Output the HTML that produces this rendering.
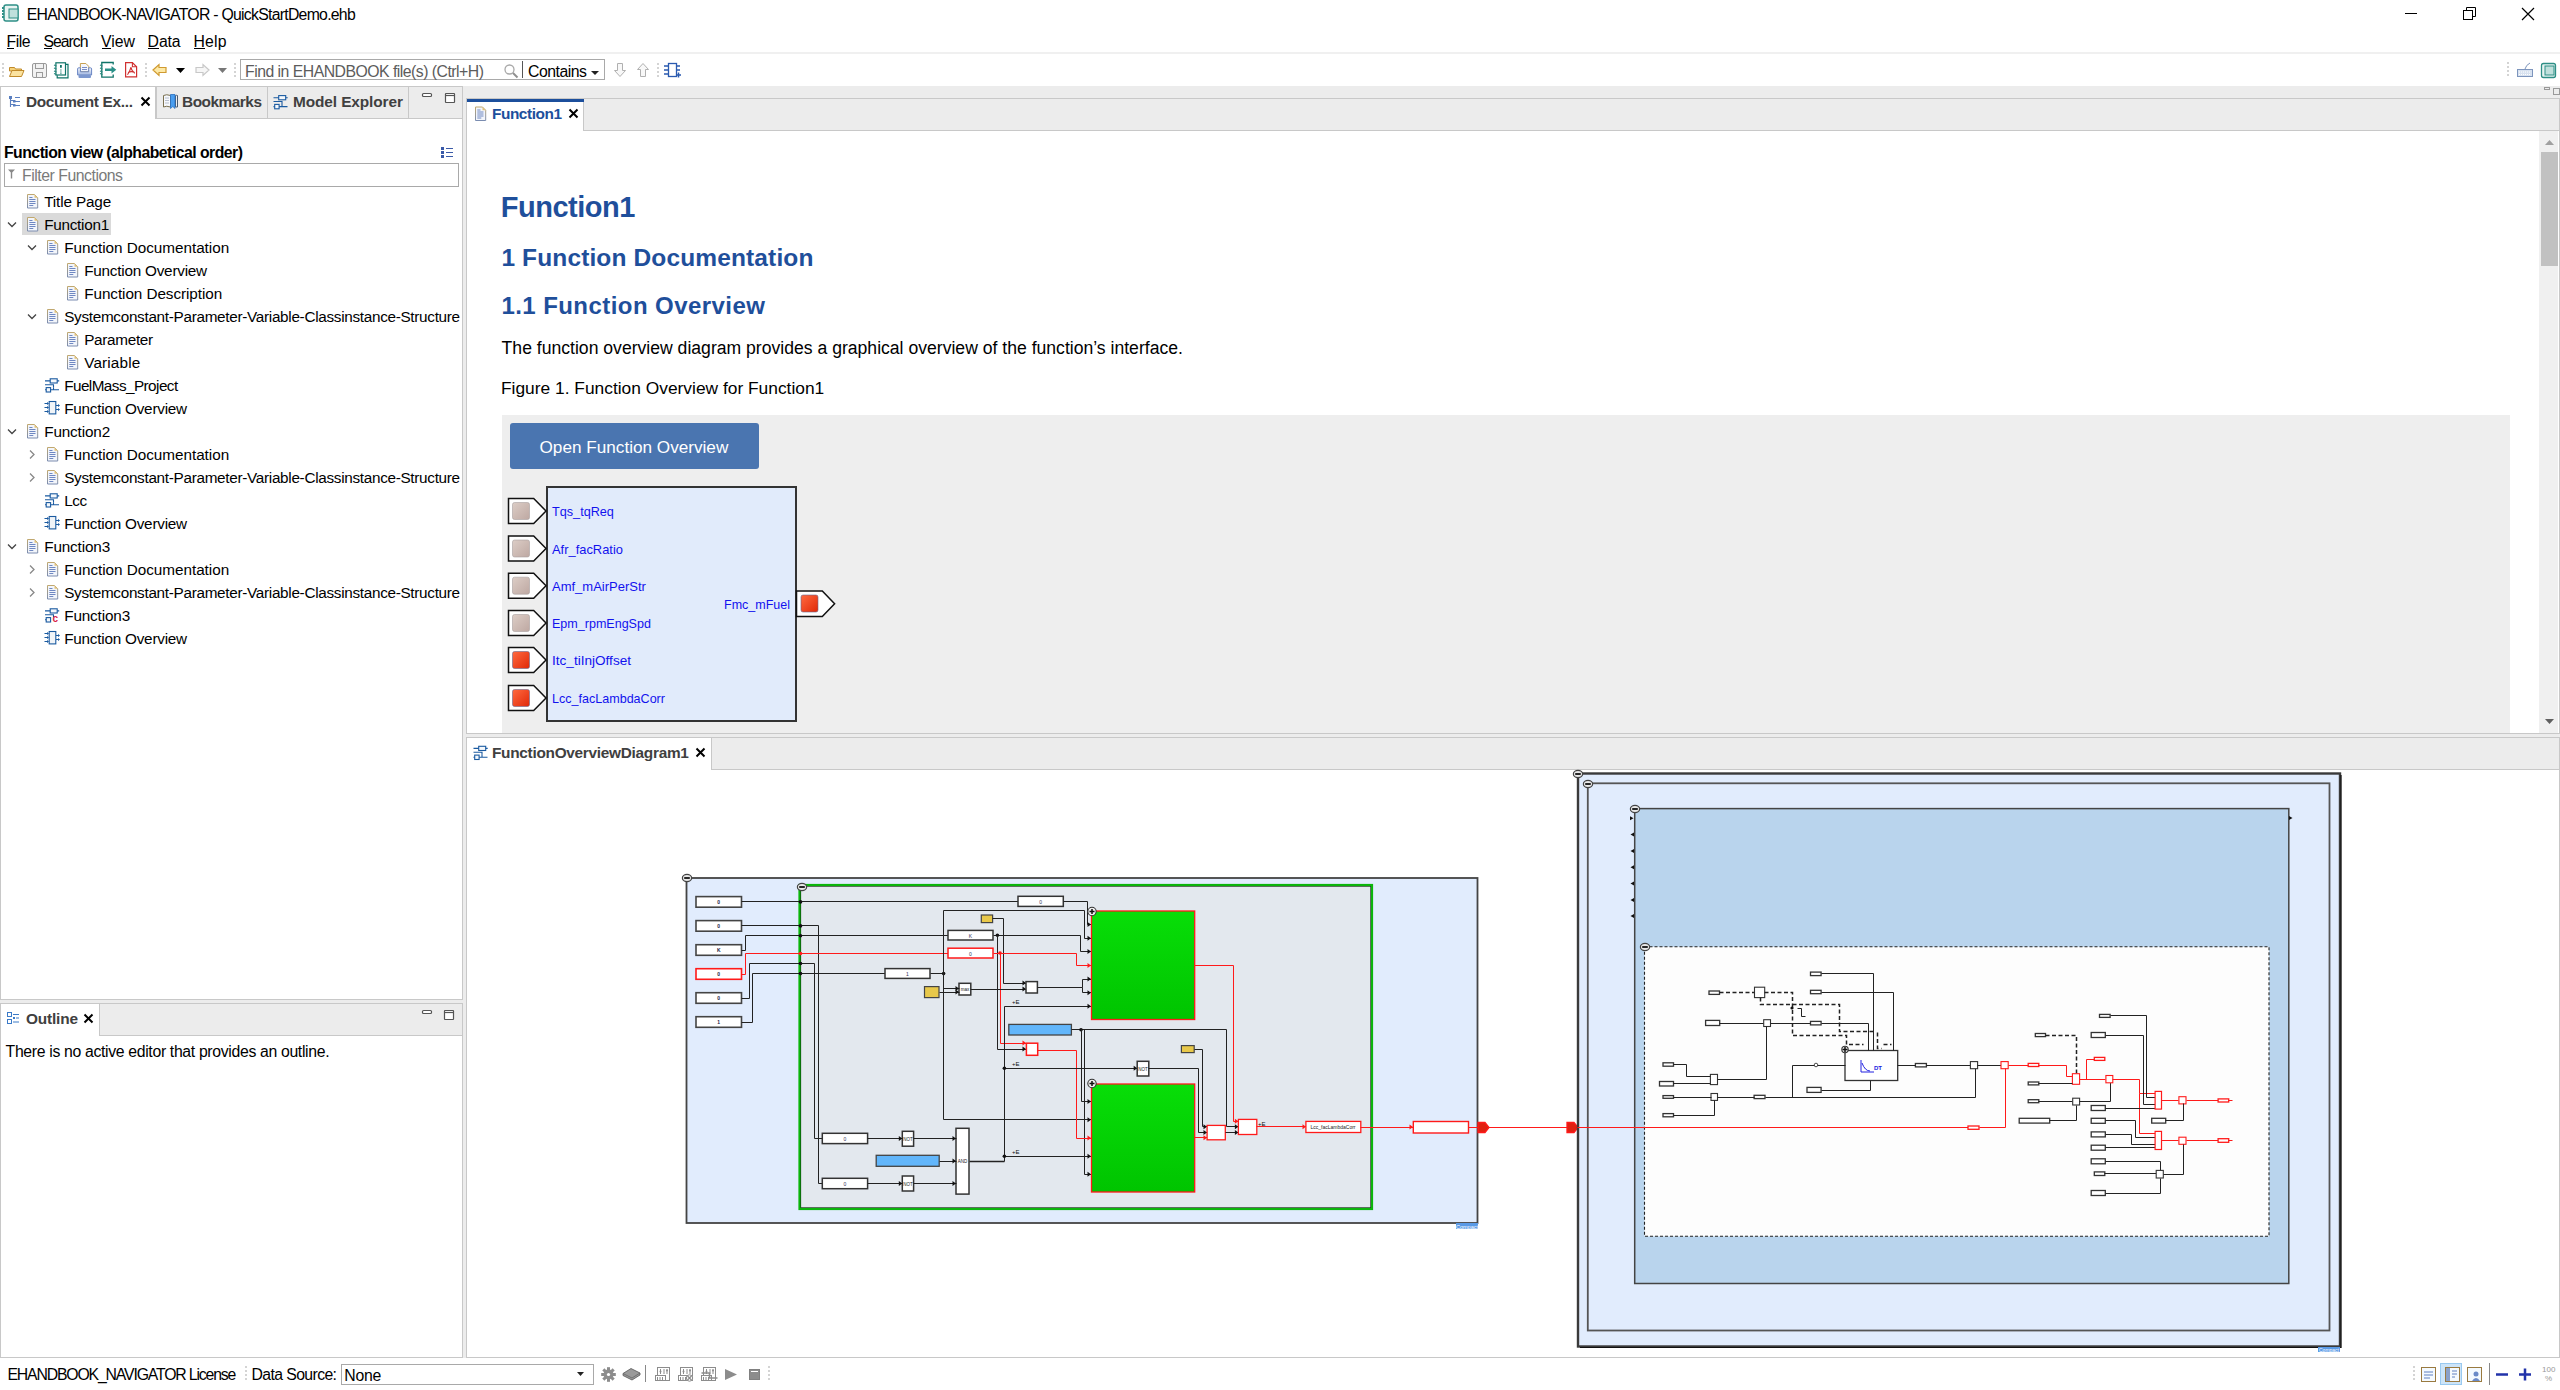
<!DOCTYPE html>
<html><head><meta charset="utf-8"><title>EHANDBOOK-NAVIGATOR</title>
<style>
html,body{margin:0;padding:0;width:2560px;height:1390px;overflow:hidden;background:#fff;font-family:'Liberation Sans', sans-serif;}
</style></head><body>
<div style="position:absolute;left:7px;top:48px;width:7px;height:1px;background:#000"></div><div style="position:absolute;left:44px;top:48px;width:8px;height:1px;background:#000"></div><div style="position:absolute;left:102px;top:48px;width:9px;height:1px;background:#000"></div><div style="position:absolute;left:148px;top:48px;width:11px;height:1px;background:#000"></div><div style="position:absolute;left:194px;top:48px;width:11px;height:1px;background:#000"></div><div style="position:absolute;left:0px;top:52px;width:2560px;height:2px;background:#f0f0f0"></div><div style="position:absolute;left:2px;top:63px;width:2px;height:2px;background:#d4d4d4"></div><div style="position:absolute;left:2px;top:67px;width:2px;height:2px;background:#d4d4d4"></div><div style="position:absolute;left:2px;top:71px;width:2px;height:2px;background:#d4d4d4"></div><div style="position:absolute;left:2px;top:75px;width:2px;height:2px;background:#d4d4d4"></div><div style="position:absolute;left:145px;top:63px;width:2px;height:2px;background:#d4d4d4"></div><div style="position:absolute;left:145px;top:67px;width:2px;height:2px;background:#d4d4d4"></div><div style="position:absolute;left:145px;top:71px;width:2px;height:2px;background:#d4d4d4"></div><div style="position:absolute;left:145px;top:75px;width:2px;height:2px;background:#d4d4d4"></div><div style="position:absolute;left:234px;top:63px;width:2px;height:2px;background:#d4d4d4"></div><div style="position:absolute;left:234px;top:67px;width:2px;height:2px;background:#d4d4d4"></div><div style="position:absolute;left:234px;top:71px;width:2px;height:2px;background:#d4d4d4"></div><div style="position:absolute;left:234px;top:75px;width:2px;height:2px;background:#d4d4d4"></div><div style="position:absolute;left:657px;top:63px;width:2px;height:2px;background:#d4d4d4"></div><div style="position:absolute;left:657px;top:67px;width:2px;height:2px;background:#d4d4d4"></div><div style="position:absolute;left:657px;top:71px;width:2px;height:2px;background:#d4d4d4"></div><div style="position:absolute;left:657px;top:75px;width:2px;height:2px;background:#d4d4d4"></div><div style="position:absolute;left:2413px;top:1366px;width:2px;height:2px;background:#d4d4d4"></div><div style="position:absolute;left:2413px;top:1370px;width:2px;height:2px;background:#d4d4d4"></div><div style="position:absolute;left:2413px;top:1374px;width:2px;height:2px;background:#d4d4d4"></div><div style="position:absolute;left:2413px;top:1378px;width:2px;height:2px;background:#d4d4d4"></div><div style="position:absolute;left:768px;top:1366px;width:2px;height:2px;background:#d4d4d4"></div><div style="position:absolute;left:768px;top:1370px;width:2px;height:2px;background:#d4d4d4"></div><div style="position:absolute;left:768px;top:1374px;width:2px;height:2px;background:#d4d4d4"></div><div style="position:absolute;left:768px;top:1378px;width:2px;height:2px;background:#d4d4d4"></div><div style="position:absolute;left:245px;top:1366px;width:2px;height:2px;background:#d4d4d4"></div><div style="position:absolute;left:245px;top:1370px;width:2px;height:2px;background:#d4d4d4"></div><div style="position:absolute;left:245px;top:1374px;width:2px;height:2px;background:#d4d4d4"></div><div style="position:absolute;left:245px;top:1378px;width:2px;height:2px;background:#d4d4d4"></div><div style="position:absolute;left:2507px;top:62px;width:2px;height:2px;background:#d4d4d4"></div><div style="position:absolute;left:2507px;top:66px;width:2px;height:2px;background:#d4d4d4"></div><div style="position:absolute;left:2507px;top:70px;width:2px;height:2px;background:#d4d4d4"></div><div style="position:absolute;left:2507px;top:74px;width:2px;height:2px;background:#d4d4d4"></div><div style="position:absolute;left:240px;top:59px;width:365px;height:21px;border:1px solid #a9a9a9;background:#fff;box-sizing:border-box"></div><div style="position:absolute;left:522px;top:61px;width:1px;height:17px;background:#555"></div><div style="position:absolute;left:0px;top:86px;width:2560px;height:1272px;background:#ececec"></div><div style="position:absolute;left:0px;top:86px;width:463px;height:914px;background:#fff;border:1px solid #c8c8c8;box-sizing:border-box"></div><div style="position:absolute;left:1px;top:87px;width:461px;height:31px;background:#ececec"></div><div style="position:absolute;left:1px;top:118px;width:461px;height:1px;background:#c8c8c8"></div><div style="position:absolute;left:1px;top:86px;width:155px;height:33px;background:#fff;border-right:1px solid #c8c8c8;border-top:1px solid #c8c8c8;box-sizing:border-box"></div><div style="position:absolute;left:156px;top:86px;width:1px;height:33px;background:#c8c8c8"></div><div style="position:absolute;left:267px;top:87px;width:1px;height:31px;background:#c8c8c8"></div><div style="position:absolute;left:408px;top:87px;width:1px;height:31px;background:#c8c8c8"></div><div style="position:absolute;left:4px;top:163px;width:455px;height:24px;border:1px solid #a9a9a9;background:#fff;box-sizing:border-box"></div><div style="position:absolute;left:22px;top:213px;width:89px;height:22px;background:#dadada"></div><div style="position:absolute;left:0px;top:1003px;width:463px;height:355px;background:#fff;border:1px solid #c8c8c8;box-sizing:border-box"></div><div style="position:absolute;left:1px;top:1004px;width:461px;height:31px;background:#ececec"></div><div style="position:absolute;left:1px;top:1035px;width:461px;height:1px;background:#c8c8c8"></div><div style="position:absolute;left:1px;top:1003px;width:99px;height:33px;background:#fff;border-top:1px solid #c8c8c8;border-right:1px solid #c8c8c8;box-sizing:border-box"></div><div style="position:absolute;left:466px;top:98px;width:2094px;height:636px;background:#fff;border:1px solid #c8c8c8;box-sizing:border-box"></div><div style="position:absolute;left:467px;top:99px;width:2092px;height:31px;background:#ececec"></div><div style="position:absolute;left:467px;top:130px;width:2092px;height:1px;background:#c8c8c8"></div><div style="position:absolute;left:467px;top:99px;width:117px;height:32px;background:#fff;border-right:1px solid #c8c8c8;box-sizing:border-box"></div><div style="position:absolute;left:467px;top:99px;width:117px;height:3px;background:#1c4f9c"></div><div style="position:absolute;left:2539px;top:131px;width:19px;height:602px;background:#f0f0f0"></div><div style="position:absolute;left:2541px;top:152px;width:17px;height:114px;background:#c1c1c1"></div><div style="position:absolute;left:502px;top:415px;width:2008px;height:318px;background:#eeeeee"></div><div style="position:absolute;left:510px;top:423px;width:249px;height:46px;background:#4a75b0;border-radius:3px"></div><div style="position:absolute;left:546px;top:486px;width:251px;height:236px;background:#e1ebfb;border:2px solid #333;box-sizing:border-box"></div><div style="position:absolute;left:466px;top:737px;width:2094px;height:621px;background:#fff;border:1px solid #c8c8c8;box-sizing:border-box"></div><div style="position:absolute;left:467px;top:738px;width:2092px;height:31px;background:#ececec"></div><div style="position:absolute;left:467px;top:769px;width:2092px;height:1px;background:#c8c8c8"></div><div style="position:absolute;left:467px;top:738px;width:245px;height:32px;background:#fff;border-right:1px solid #c8c8c8;box-sizing:border-box"></div><div style="position:absolute;left:341px;top:1364px;width:253px;height:21px;border:1px solid #a9a9a9;background:#fff;box-sizing:border-box"></div><div style="position:absolute;left:645px;top:1365px;width:1px;height:17px;background:#888"></div><div style="position:absolute;left:2440px;top:1363px;width:22px;height:22px;background:#cce4f8;border:1px solid #99c9f0;box-sizing:border-box"></div><div style="position:absolute;left:2489px;top:1363px;width:1px;height:22px;background:#888"></div>
<svg style="position:absolute;left:0;top:0" width="2560" height="1390" viewBox="0 0 2560 1390">
<defs>
<linearGradient id="gred" x1="0" y1="0" x2="1" y2="1"><stop offset="0" stop-color="#ff6a40"/><stop offset="1" stop-color="#e02808"/></linearGradient>
<linearGradient id="gdoc" x1="0" y1="0" x2="0" y2="1"><stop offset="0" stop-color="#c0a870"/><stop offset="1" stop-color="#7a8cb0"/></linearGradient>
<linearGradient id="ggray" x1="0" y1="0" x2="1" y2="1"><stop offset="0" stop-color="#dccdc6"/><stop offset="1" stop-color="#bea8a2"/></linearGradient>
</defs>
<line x1="2405" y1="13.5" x2="2417" y2="13.5" stroke="#000" stroke-width="1"/><rect x="2463.5" y="10.5" width="9" height="9" fill="none" stroke="#000" stroke-width="1"/><path d="M2466.5 10.5 V7.5 H2475.5 V16.5 H2472.5" fill="none" stroke="#000" stroke-width="1"/><path d="M2522 8 L2534 20 M2534 8 L2522 20" stroke="#000" stroke-width="1.2"/><rect x="4" y="5" width="14" height="16" rx="2" fill="#e8f4f2" stroke="#2e8f86" stroke-width="1.5"/><rect x="9" y="9" width="9" height="9" fill="#bfe0dc" stroke="#2e8f86"/><path d="M3 7 v12" stroke="#2e8f86" stroke-width="2" stroke-dasharray="2 1"/><path d="M9.5 67.5 h5 l1 1.5 h6 v2 h-12 z" fill="#f6d27a" stroke="#c08a2a"/><path d="M9.5 76.5 l2.5 -6 h12 l-2.5 6 z" fill="#fbe3a0" stroke="#c08a2a"/><rect x="32.5" y="63.5" width="14" height="14" rx="1.5" fill="#f2f2f2" stroke="#9a9a9a"/><rect x="35.5" y="63.5" width="8" height="5" fill="none" stroke="#9a9a9a"/><rect x="36.5" y="72.5" width="6" height="5" fill="none" stroke="#9a9a9a"/><path d="M65.8 64.3 H68 V77.8 H57.2 V75.2" fill="none" stroke="#0f7468" stroke-width="1.2"/><rect x="55.9" y="62.8" width="9.6" height="12.2" fill="#fff" stroke="#0f7468" stroke-width="1.2"/><path d="M54 65 l2.5 1 M54 68 l2.5 1 M54 71 l2.5 1 M54 73.5 l2.5 1" stroke="#2a8a80" stroke-width="1.2"/><path d="M60 65 h1.8 v2.8 h-1.8 z M60.3 69.5 h1.2 v1 h-1.2 z M60.3 71.5 h1.2 v1 h-1.2 z M60.3 73.3 h1.2 v0.8 h-1.2 z" fill="#0f7468"/><path d="M80.4 63.5 h5.5 l2.8 2.8 v5.4 h-8.3 z" fill="#f4f6fc" stroke="#c8a050" stroke-width="1"/><defs><linearGradient id="gpr" x1="0" y1="0" x2="0" y2="1"><stop offset="0" stop-color="#ffffff"/><stop offset="1" stop-color="#9fb4de"/></linearGradient></defs><path d="M77.6 69 q0 -1.2 1.2 -1.2 h1.6 v4 h8.3 v-4 h1.7 q1.2 0 1.2 1.2 v6 h-14 z" fill="url(#gpr)" stroke="#6a86c4" stroke-width="1"/><rect x="78.5" y="75" width="12.5" height="3" rx="1" fill="#7d98cf"/><path d="M82 67.5 h5 M82 69.5 h5" stroke="#6a80c0" stroke-width="0.9"/><path d="M113.2 64.5 V62.5 H101.8 V77.2 H113.2 V74.5" fill="none" stroke="#0f7468" stroke-width="1.3"/><path d="M100 65 l2.5 1 M100 68 l2.5 1 M100 71 l2.5 1 M100 73.5 l2.5 1" stroke="#2a8a80" stroke-width="1.2"/><path d="M105 68.5 h6.5 v-2.5 l4.8 3.8 l-4.8 3.8 v-2.5 h-6.5 z" fill="#2a9088"/><path d="M125.6 62.6 h6.8 l4.2 4.2 v10 h-11 z" fill="#fff" stroke="#d03030" stroke-width="1.2"/><path d="M132.4 62.6 v4.2 h4.2" fill="none" stroke="#d03030" stroke-width="1.1"/><path d="M131 67.2 q-0.8 3.5 -3.5 7.5 M131 67.2 q0.5 3.8 3.8 6 M128 72.5 q3 -1.5 6.5 -0.3" fill="none" stroke="#d03030" stroke-width="1.1"/><path d="M153 70 l6 -5.5 v3 h7 v5 h-7 v3 z" fill="#fde9a6" stroke="#d09a30" stroke-width="1.2"/><path d="M176 68 h9 l-4.5 5 z" fill="#000"/><path d="M209 70 l-6 -5.5 v3 h-7 v5 h7 v3 z" fill="#f6f6f6" stroke="#c8c8c8" stroke-width="1.2"/><path d="M218 68 h9 l-4.5 5 z" fill="#777"/><circle cx="509.5" cy="69.5" r="4.5" fill="none" stroke="#a8a8a8" stroke-width="1.3"/><path d="M513 73 l4.5 4.5" stroke="#909090" stroke-width="2"/><path d="M591 71 h8 l-4 4 z" fill="#222"/><path d="M617.5 63.5 h5 v7 h3 l-5.5 6 l-5.5 -6 h3 z" fill="#f8f8f8" stroke="#b0b0b0"/><path d="M640.5 76.5 h5 v-7 h3 l-5.5 -6 l-5.5 6 h3 z" fill="#f8f8f8" stroke="#b0b0b0"/><rect x="668.5" y="63.5" width="8" height="13" fill="#fff" stroke="#2a5ab0" stroke-width="1.3"/><path d="M664 66 h4 M664 70 h4 M664 74 h4 M677 66 h3 M677 70 h3" stroke="#2a5ab0" stroke-width="1.3"/><path d="M676 75 h5 M678.5 72.5 v5" stroke="#2a5ab0" stroke-width="1.5"/><rect x="2517.5" y="69.5" width="15" height="7" fill="#d8e2f0" stroke="#7d95bd"/><path d="M2525 69 q1 -4 5 -6" fill="none" stroke="#7d95bd"/><path d="M2519 72 h11 M2519 74.5 h11" stroke="#fff" stroke-dasharray="1 1"/><rect x="2541.5" y="63.5" width="14" height="14" rx="2" fill="#e8f4f2" stroke="#2e8f86" stroke-width="1.3"/><rect x="2545" y="66" width="9" height="9" fill="#bfe0dc" stroke="#2e8f86"/><path d="M10.5 97 v10 M10.5 100.5 h3 M10.5 104.5 h3 M15 97.5 h5 M15 101.5 h5 M15 105.5 h5" stroke="#5a7fc0" stroke-width="1.1" fill="none"/><rect x="9" y="96" width="3" height="3" fill="#5a7fc0"/><rect x="13" y="100" width="2.5" height="2.5" fill="#5a7fc0"/><rect x="13" y="104" width="2.5" height="2.5" fill="#5a7fc0"/><path d="M141.5 97.5 l8 8 M149.5 97.5 l-8 8" stroke="#000" stroke-width="2"/><path d="M163.5 95.5 q3 -1.5 7 0 v11.5 q-4 -1.5 -7 0 z" fill="#f6f8fc" stroke="#7a7050" stroke-width="1"/><path d="M175.5 95.5 q1.5 -0.5 2 0 v11.5 h-2 z" fill="#f0f0f0" stroke="#4a5a70" stroke-width="1"/><path d="M170.5 94.5 h4.5 v14 l-2.2 -2 l-2.3 2 z" fill="#4a9ef0" stroke="#2a70c0" stroke-width="0.8"/><path d="M165 98 h4 M165 100.5 h4 M165 103 h4" stroke="#a8b0c0" stroke-width="0.8"/><rect x="422.5" y="93.5" width="9" height="3" rx="1" fill="#fff" stroke="#555" stroke-width="1.2"/><rect x="445.5" y="93.5" width="9" height="9" rx="0.5" fill="#fff" stroke="#555" stroke-width="1.2"/><line x1="445" y1="95.5" x2="455" y2="95.5" stroke="#555" stroke-width="1.2"/><rect x="441" y="147" width="3" height="3" fill="#3a5aa8"/><rect x="441" y="151" width="3" height="3" fill="#3a5aa8"/><rect x="441" y="155" width="3" height="3" fill="#3a5aa8"/><path d="M446 148.5 h7 M446 152.5 h7 M446 156.5 h7" stroke="#3a5aa8" stroke-width="1"/><path d="M8 169.5 h7 l-2.8 3 v6 h-1.4 v-6 z" fill="#888"/><rect x="278.7" y="95.6" width="7" height="4.2" fill="#f4f8fc" stroke="#1a5aa0" stroke-width="1.1"/><path d="M273.5 97.7 h5.2 M285.7 97.7 h2 M273.5 101.5 h8.5 v2.5" fill="none" stroke="#1a5aa0" stroke-width="1.1"/><rect x="274.7" y="104.4" width="4.4" height="4.4" fill="#f4f8fc" stroke="#1a5aa0" stroke-width="1.1"/><path d="M273.5 106.6 h1.2" stroke="#1a5aa0" stroke-width="1.1"/><path d="M282.0 104 v2.6 M279.1 106.6 h8.4" fill="none" stroke="#1a5aa0" stroke-width="1.1"/><path d="M27.5 194.5 h7 l3.2 3.2 v10.3 h-10.2 z" fill="#f2f5fb" stroke="url(#gdoc)" stroke-width="1"/><path d="M34.5 194.5 v3.2 h3.2 z" fill="#e2c27a"/><path d="M29.3 197.5 h3.2 M29.3 199.5 h6.2 M29.3 201.5 h6.2 M29.3 203.5 h6.2 M29.3 205.5 h4" stroke="#6f88c2" stroke-width="1"/><path d="M8 222.5 l4 4 l4 -4" fill="none" stroke="#444" stroke-width="1.3"/><path d="M27.5 217.5 h7 l3.2 3.2 v10.3 h-10.2 z" fill="#f2f5fb" stroke="url(#gdoc)" stroke-width="1"/><path d="M34.5 217.5 v3.2 h3.2 z" fill="#e2c27a"/><path d="M29.3 220.5 h3.2 M29.3 222.5 h6.2 M29.3 224.5 h6.2 M29.3 226.5 h6.2 M29.3 228.5 h4" stroke="#6f88c2" stroke-width="1"/><path d="M28 245.5 l4 4 l4 -4" fill="none" stroke="#444" stroke-width="1.3"/><path d="M47.5 240.5 h7 l3.2 3.2 v10.3 h-10.2 z" fill="#f2f5fb" stroke="url(#gdoc)" stroke-width="1"/><path d="M54.5 240.5 v3.2 h3.2 z" fill="#e2c27a"/><path d="M49.3 243.5 h3.2 M49.3 245.5 h6.2 M49.3 247.5 h6.2 M49.3 249.5 h6.2 M49.3 251.5 h4" stroke="#6f88c2" stroke-width="1"/><path d="M67.5 263.5 h7 l3.2 3.2 v10.3 h-10.2 z" fill="#f2f5fb" stroke="url(#gdoc)" stroke-width="1"/><path d="M74.5 263.5 v3.2 h3.2 z" fill="#e2c27a"/><path d="M69.3 266.5 h3.2 M69.3 268.5 h6.2 M69.3 270.5 h6.2 M69.3 272.5 h6.2 M69.3 274.5 h4" stroke="#6f88c2" stroke-width="1"/><path d="M67.5 286.5 h7 l3.2 3.2 v10.3 h-10.2 z" fill="#f2f5fb" stroke="url(#gdoc)" stroke-width="1"/><path d="M74.5 286.5 v3.2 h3.2 z" fill="#e2c27a"/><path d="M69.3 289.5 h3.2 M69.3 291.5 h6.2 M69.3 293.5 h6.2 M69.3 295.5 h6.2 M69.3 297.5 h4" stroke="#6f88c2" stroke-width="1"/><path d="M28 314.5 l4 4 l4 -4" fill="none" stroke="#444" stroke-width="1.3"/><path d="M47.5 309.5 h7 l3.2 3.2 v10.3 h-10.2 z" fill="#f2f5fb" stroke="url(#gdoc)" stroke-width="1"/><path d="M54.5 309.5 v3.2 h3.2 z" fill="#e2c27a"/><path d="M49.3 312.5 h3.2 M49.3 314.5 h6.2 M49.3 316.5 h6.2 M49.3 318.5 h6.2 M49.3 320.5 h4" stroke="#6f88c2" stroke-width="1"/><path d="M67.5 332.5 h7 l3.2 3.2 v10.3 h-10.2 z" fill="#f2f5fb" stroke="url(#gdoc)" stroke-width="1"/><path d="M74.5 332.5 v3.2 h3.2 z" fill="#e2c27a"/><path d="M69.3 335.5 h3.2 M69.3 337.5 h6.2 M69.3 339.5 h6.2 M69.3 341.5 h6.2 M69.3 343.5 h4" stroke="#6f88c2" stroke-width="1"/><path d="M67.5 355.5 h7 l3.2 3.2 v10.3 h-10.2 z" fill="#f2f5fb" stroke="url(#gdoc)" stroke-width="1"/><path d="M74.5 355.5 v3.2 h3.2 z" fill="#e2c27a"/><path d="M69.3 358.5 h3.2 M69.3 360.5 h6.2 M69.3 362.5 h6.2 M69.3 364.5 h6.2 M69.3 366.5 h4" stroke="#6f88c2" stroke-width="1"/><rect x="50.2" y="378.8" width="7" height="4.2" fill="#f4f8fc" stroke="#1a5aa0" stroke-width="1.1"/><path d="M45 380.9 h5.2 M57.2 380.9 h2 M45 384.7 h8.5 v2.5" fill="none" stroke="#1a5aa0" stroke-width="1.1"/><rect x="46.2" y="387.59999999999997" width="4.4" height="4.4" fill="#f4f8fc" stroke="#1a5aa0" stroke-width="1.1"/><path d="M45 389.8 h1.2" stroke="#1a5aa0" stroke-width="1.1"/><path d="M53.5 387.2 v2.6 M50.6 389.8 h8.4" fill="none" stroke="#1a5aa0" stroke-width="1.1"/><rect x="49.2" y="401.5" width="6.6" height="12.4" fill="#f0f4f8" stroke="#1a5aa0" stroke-width="1.1"/><path d="M44.5 403.5 h3.5 M44.5 407.5 h3.5 M44.5 411.5 h3.5 M56.0 405.5 h3 M56.0 409.5 h3" stroke="#1a5aa0" stroke-width="1.1"/><path d="M47.0 402.0 l2 1.5 l-2 1.5 z M47.0 406.0 l2 1.5 l-2 1.5 z M47.0 410.0 l2 1.5 l-2 1.5 z M58.0 404.0 l2 1.5 l-2 1.5 z M58.0 408.0 l2 1.5 l-2 1.5 z" fill="#1a5aa0"/><path d="M8 429.5 l4 4 l4 -4" fill="none" stroke="#444" stroke-width="1.3"/><path d="M27.5 424.5 h7 l3.2 3.2 v10.3 h-10.2 z" fill="#f2f5fb" stroke="url(#gdoc)" stroke-width="1"/><path d="M34.5 424.5 v3.2 h3.2 z" fill="#e2c27a"/><path d="M29.3 427.5 h3.2 M29.3 429.5 h6.2 M29.3 431.5 h6.2 M29.3 433.5 h6.2 M29.3 435.5 h4" stroke="#6f88c2" stroke-width="1"/><path d="M30 450.5 l4 4 l-4 4" fill="none" stroke="#888" stroke-width="1.3"/><path d="M47.5 447.5 h7 l3.2 3.2 v10.3 h-10.2 z" fill="#f2f5fb" stroke="url(#gdoc)" stroke-width="1"/><path d="M54.5 447.5 v3.2 h3.2 z" fill="#e2c27a"/><path d="M49.3 450.5 h3.2 M49.3 452.5 h6.2 M49.3 454.5 h6.2 M49.3 456.5 h6.2 M49.3 458.5 h4" stroke="#6f88c2" stroke-width="1"/><path d="M30 473.5 l4 4 l-4 4" fill="none" stroke="#888" stroke-width="1.3"/><path d="M47.5 470.5 h7 l3.2 3.2 v10.3 h-10.2 z" fill="#f2f5fb" stroke="url(#gdoc)" stroke-width="1"/><path d="M54.5 470.5 v3.2 h3.2 z" fill="#e2c27a"/><path d="M49.3 473.5 h3.2 M49.3 475.5 h6.2 M49.3 477.5 h6.2 M49.3 479.5 h6.2 M49.3 481.5 h4" stroke="#6f88c2" stroke-width="1"/><rect x="50.2" y="493.8" width="7" height="4.2" fill="#f4f8fc" stroke="#1a5aa0" stroke-width="1.1"/><path d="M45 495.9 h5.2 M57.2 495.9 h2 M45 499.7 h8.5 v2.5" fill="none" stroke="#1a5aa0" stroke-width="1.1"/><rect x="46.2" y="502.59999999999997" width="4.4" height="4.4" fill="#f4f8fc" stroke="#1a5aa0" stroke-width="1.1"/><path d="M45 504.8 h1.2" stroke="#1a5aa0" stroke-width="1.1"/><path d="M53.5 502.2 v2.6 M50.6 504.8 h8.4" fill="none" stroke="#1a5aa0" stroke-width="1.1"/><rect x="49.2" y="516.5" width="6.6" height="12.4" fill="#f0f4f8" stroke="#1a5aa0" stroke-width="1.1"/><path d="M44.5 518.5 h3.5 M44.5 522.5 h3.5 M44.5 526.5 h3.5 M56.0 520.5 h3 M56.0 524.5 h3" stroke="#1a5aa0" stroke-width="1.1"/><path d="M47.0 517.0 l2 1.5 l-2 1.5 z M47.0 521.0 l2 1.5 l-2 1.5 z M47.0 525.0 l2 1.5 l-2 1.5 z M58.0 519.0 l2 1.5 l-2 1.5 z M58.0 523.0 l2 1.5 l-2 1.5 z" fill="#1a5aa0"/><path d="M8 544.5 l4 4 l4 -4" fill="none" stroke="#444" stroke-width="1.3"/><path d="M27.5 539.5 h7 l3.2 3.2 v10.3 h-10.2 z" fill="#f2f5fb" stroke="url(#gdoc)" stroke-width="1"/><path d="M34.5 539.5 v3.2 h3.2 z" fill="#e2c27a"/><path d="M29.3 542.5 h3.2 M29.3 544.5 h6.2 M29.3 546.5 h6.2 M29.3 548.5 h6.2 M29.3 550.5 h4" stroke="#6f88c2" stroke-width="1"/><path d="M30 565.5 l4 4 l-4 4" fill="none" stroke="#888" stroke-width="1.3"/><path d="M47.5 562.5 h7 l3.2 3.2 v10.3 h-10.2 z" fill="#f2f5fb" stroke="url(#gdoc)" stroke-width="1"/><path d="M54.5 562.5 v3.2 h3.2 z" fill="#e2c27a"/><path d="M49.3 565.5 h3.2 M49.3 567.5 h6.2 M49.3 569.5 h6.2 M49.3 571.5 h6.2 M49.3 573.5 h4" stroke="#6f88c2" stroke-width="1"/><path d="M30 588.5 l4 4 l-4 4" fill="none" stroke="#888" stroke-width="1.3"/><path d="M47.5 585.5 h7 l3.2 3.2 v10.3 h-10.2 z" fill="#f2f5fb" stroke="url(#gdoc)" stroke-width="1"/><path d="M54.5 585.5 v3.2 h3.2 z" fill="#e2c27a"/><path d="M49.3 588.5 h3.2 M49.3 590.5 h6.2 M49.3 592.5 h6.2 M49.3 594.5 h6.2 M49.3 596.5 h4" stroke="#6f88c2" stroke-width="1"/><rect x="50.2" y="608.8000000000001" width="7" height="4.2" fill="#f4f8fc" stroke="#1a5aa0" stroke-width="1.1"/><path d="M45 610.9000000000001 h5.2 M57.2 610.9000000000001 h2 M45 614.7 h8.5 v2.5" fill="none" stroke="#1a5aa0" stroke-width="1.1"/><rect x="46.2" y="617.6" width="4.4" height="4.4" fill="#f4f8fc" stroke="#1a5aa0" stroke-width="1.1"/><path d="M45 619.8000000000001 h1.2" stroke="#1a5aa0" stroke-width="1.1"/><text x="52.6" y="622.0" font-family="Liberation Sans" font-weight="700" font-size="10" fill="#d81e48">c</text><rect x="49.2" y="631.5" width="6.6" height="12.4" fill="#f0f4f8" stroke="#1a5aa0" stroke-width="1.1"/><path d="M44.5 633.5 h3.5 M44.5 637.5 h3.5 M44.5 641.5 h3.5 M56.0 635.5 h3 M56.0 639.5 h3" stroke="#1a5aa0" stroke-width="1.1"/><path d="M47.0 632.0 l2 1.5 l-2 1.5 z M47.0 636.0 l2 1.5 l-2 1.5 z M47.0 640.0 l2 1.5 l-2 1.5 z M58.0 634.0 l2 1.5 l-2 1.5 z M58.0 638.0 l2 1.5 l-2 1.5 z" fill="#1a5aa0"/><rect x="7.5" y="1012.5" width="4" height="4" fill="#fff" stroke="#3a7ac8"/><rect x="7.5" y="1019.5" width="4" height="4" fill="#fff" stroke="#3a7ac8"/><rect x="13" y="1017" width="2" height="2" fill="#3a7ac8"/><path d="M13 1014.5 h6 M16 1018 h3 M13 1022 h6" stroke="#3a7ac8"/><path d="M84.5 1014.5 l8 8 M92.5 1014.5 l-8 8" stroke="#000" stroke-width="2"/><rect x="422.5" y="1010.5" width="9" height="3" rx="1" fill="#fff" stroke="#555" stroke-width="1.2"/><rect x="444.5" y="1010.5" width="9" height="9" rx="0.5" fill="#fff" stroke="#555" stroke-width="1.2"/><line x1="444" y1="1012.5" x2="454" y2="1012.5" stroke="#555" stroke-width="1.2"/><path d="M475.5 107 h7 l3.2 3.2 v10.3 h-10.2 z" fill="#f2f5fb" stroke="url(#gdoc)" stroke-width="1"/><path d="M482.5 107 v3.2 h3.2 z" fill="#e2c27a"/><path d="M477.3 110 h3.2 M477.3 112 h6.2 M477.3 114 h6.2 M477.3 116 h6.2 M477.3 118 h4" stroke="#6f88c2" stroke-width="1"/><path d="M569.5 109.5 l8 8 M577.5 109.5 l-8 8" stroke="#000" stroke-width="2"/><rect x="2544.5" y="87.5" width="5" height="2" fill="none" stroke="#999"/><rect x="2553.5" y="88.5" width="6" height="6" fill="none" stroke="#999"/><path d="M2545 145 h9 l-4.5 -5 z" fill="#a0a0a0"/><path d="M2545 719 h9 l-4.5 5 z" fill="#606060"/><path d="M508.5 498.5 h25.2 l12.3 12.5 l-12.3 12.5 h-25.2 z" fill="#fff" stroke="#111" stroke-width="1.5"/><rect x="512.5" y="502.5" width="17" height="17" rx="2" fill="url(#ggray)" stroke="#a8a0a0" stroke-width="0.6"/><path d="M508.5 536.0 h25.2 l12.3 12.5 l-12.3 12.5 h-25.2 z" fill="#fff" stroke="#111" stroke-width="1.5"/><rect x="512.5" y="540.0" width="17" height="17" rx="2" fill="url(#ggray)" stroke="#a8a0a0" stroke-width="0.6"/><path d="M508.5 573.2 h25.2 l12.3 12.5 l-12.3 12.5 h-25.2 z" fill="#fff" stroke="#111" stroke-width="1.5"/><rect x="512.5" y="577.2" width="17" height="17" rx="2" fill="url(#ggray)" stroke="#a8a0a0" stroke-width="0.6"/><path d="M508.5 610.5 h25.2 l12.3 12.5 l-12.3 12.5 h-25.2 z" fill="#fff" stroke="#111" stroke-width="1.5"/><rect x="512.5" y="614.5" width="17" height="17" rx="2" fill="url(#ggray)" stroke="#a8a0a0" stroke-width="0.6"/><path d="M508.5 647.5 h25.2 l12.3 12.5 l-12.3 12.5 h-25.2 z" fill="#fff" stroke="#111" stroke-width="1.5"/><rect x="512.5" y="651.5" width="17" height="17" rx="2" fill="url(#gred)" stroke="#6a6a90" stroke-width="0.6"/><path d="M508.5 685.5 h25.2 l12.3 12.5 l-12.3 12.5 h-25.2 z" fill="#fff" stroke="#111" stroke-width="1.5"/><rect x="512.5" y="689.5" width="17" height="17" rx="2" fill="url(#gred)" stroke="#6a6a90" stroke-width="0.6"/><path d="M796.5 591 h25.8 l12.3 12.7 l-12.3 12.7 h-25.8 z" fill="#fff" stroke="#111" stroke-width="1.5"/><rect x="801" y="595" width="17" height="17" rx="2" fill="url(#gred)" stroke="#6a6a90" stroke-width="0.6"/><rect x="478.7" y="746.3000000000001" width="7" height="4.2" fill="#f4f8fc" stroke="#1a5aa0" stroke-width="1.1"/><path d="M473.5 748.4000000000001 h5.2 M485.7 748.4000000000001 h2 M473.5 752.2 h8.5 v2.5" fill="none" stroke="#1a5aa0" stroke-width="1.1"/><rect x="474.7" y="755.1" width="4.4" height="4.4" fill="#f4f8fc" stroke="#1a5aa0" stroke-width="1.1"/><path d="M473.5 757.3000000000001 h1.2" stroke="#1a5aa0" stroke-width="1.1"/><path d="M482.0 754.7 v2.6 M479.1 757.3000000000001 h8.4" fill="none" stroke="#1a5aa0" stroke-width="1.1"/><path d="M696.5 748.5 l8 8 M704.5 748.5 l-8 8" stroke="#000" stroke-width="2"/><rect x="686.5" y="878.0" width="791.0" height="345.0" fill="#e1ecfd" stroke="#444" stroke-width="1.8" /><ellipse cx="687" cy="878" rx="4.620000000000001" ry="3.57" fill="#e8e8e8" stroke="#444" stroke-width="1.2"/><path d="M684.2 878 h5.6" stroke="#111" stroke-width="1.8"/><rect x="1456" y="1223" width="22" height="6" fill="#5a9ae6"/><text x="1467" y="1228.5" text-anchor="middle" font-family="Liberation Sans" font-size="5.5" fill="#fff">Compact</text><rect x="800.5" y="886.0" width="570.5" height="322.0" fill="#e3e8ee" stroke="#111" stroke-width="1.2" /><rect x="799.5" y="885" width="572.5" height="324" fill="none" stroke="#0bb50b" stroke-width="2.2"/><ellipse cx="802" cy="887" rx="4.620000000000001" ry="3.57" fill="#e8e8e8" stroke="#444" stroke-width="1.2"/><path d="M799.2 887 h5.6" stroke="#111" stroke-width="1.8"/><rect x="696.0" y="896.6" width="45.5" height="10.6" fill="#fff" stroke="#444" stroke-width="1.6" /><text x="718.7" y="903.6999999999999" text-anchor="middle" font-family="Liberation Sans" font-size="5" font-weight="700" fill="#224">0</text><rect x="696.0" y="920.6" width="45.5" height="10.6" fill="#fff" stroke="#444" stroke-width="1.6" /><text x="718.7" y="927.6999999999999" text-anchor="middle" font-family="Liberation Sans" font-size="5" font-weight="700" fill="#224">0</text><rect x="696.0" y="944.7" width="45.5" height="10.6" fill="#fff" stroke="#444" stroke-width="1.6" /><text x="718.7" y="951.8" text-anchor="middle" font-family="Liberation Sans" font-size="5" font-weight="700" fill="#224">K</text><rect x="696.0" y="968.7" width="45.5" height="10.6" fill="#fff" stroke="#ff1a1a" stroke-width="1.6" /><text x="718.7" y="975.8" text-anchor="middle" font-family="Liberation Sans" font-size="5" font-weight="700" fill="#224">0</text><rect x="696.0" y="992.7" width="45.5" height="10.6" fill="#fff" stroke="#444" stroke-width="1.6" /><text x="718.7" y="999.8" text-anchor="middle" font-family="Liberation Sans" font-size="5" font-weight="700" fill="#224">0</text><rect x="696.0" y="1016.7" width="45.5" height="10.6" fill="#fff" stroke="#444" stroke-width="1.6" /><text x="718.7" y="1023.8" text-anchor="middle" font-family="Liberation Sans" font-size="5" font-weight="700" fill="#224">1</text><polyline points="741.5,901.5 1018.5,901.5" fill="none" stroke="#222" stroke-width="1.0"/><circle cx="800.5" cy="901.9" r="1.8" fill="#111"/><polyline points="741.5,925.5 818.5,925.5 818.5,925.5 818.5,1183.5 822.5,1183.5" fill="none" stroke="#222" stroke-width="1.0"/><circle cx="800.5" cy="925.9" r="1.8" fill="#111"/><polyline points="741.5,950.5 745.5,950.5 745.5,935.5 948.5,935.5" fill="none" stroke="#222" stroke-width="1.0"/><circle cx="800.5" cy="935.7" r="1.8" fill="#111"/><polyline points="741.5,974.5 745.5,974.5 745.5,953.5 948.5,953.5" fill="none" stroke="#ff1a1a" stroke-width="1.0"/><circle cx="800.5" cy="953.5" r="1.8" fill="#ff1a1a"/><polyline points="741.5,998.5 749.5,998.5 749.5,963.5 814.5,963.5 814.5,1138.5 822.5,1138.5" fill="none" stroke="#222" stroke-width="1.0"/><circle cx="800.5" cy="963.5" r="1.8" fill="#111"/><polyline points="741.5,1022.5 752.5,1022.5 752.5,973.5 885.5,973.5" fill="none" stroke="#222" stroke-width="1.0"/><circle cx="800.5" cy="973.6" r="1.8" fill="#111"/><rect x="1018.0" y="896.3" width="45.3" height="10.1" fill="#fff" stroke="#333" stroke-width="1.5" /><polyline points="1063.5,901.5 1087.5,901.5 1087.5,924.5 1091.5,924.5" fill="none" stroke="#222" stroke-width="1.0"/><path d="M1087.5 921.9 L1091.0 924.4 L1087.5 926.9 z" fill="#111"/><rect x="948.0" y="930.4" width="45.0" height="9.6" fill="#fff" stroke="#333" stroke-width="1.5" /><rect x="948.0" y="948.2" width="45.0" height="9.8" fill="#fff" stroke="#ff1a1a" stroke-width="1.5" /><rect x="885.0" y="968.6" width="45.0" height="9.8" fill="#fff" stroke="#333" stroke-width="1.5" /><polyline points="930.5,973.5 943.5,973.5" fill="none" stroke="#222" stroke-width="1.0"/><circle cx="943.6" cy="973.6" r="1.8" fill="#111"/><polyline points="943.5,910.5 943.5,1119.5 1091.5,1119.5" fill="none" stroke="#222" stroke-width="1.0"/><path d="M1087.5 1117.2 L1091.0 1119.7 L1087.5 1122.2 z" fill="#111"/><polyline points="943.5,910.5 1084.5,910.5 1084.5,938.5 1091.5,938.5" fill="none" stroke="#222" stroke-width="1.0"/><path d="M1087.5 935.8 L1091.0 938.3 L1087.5 940.8 z" fill="#111"/><rect x="981.3" y="915.0" width="11.3" height="7.6" fill="#e8c84a" stroke="#444" stroke-width="1.2" /><polyline points="992.5,918.5 1003.5,918.5 1003.5,983.5 1026.5,983.5" fill="none" stroke="#222" stroke-width="1.0"/><path d="M1022.5 980.5 L1026.0 983.0 L1022.5 985.5 z" fill="#111"/><polyline points="993.5,935.5 1080.5,935.5 1080.5,951.5 1091.5,951.5" fill="none" stroke="#222" stroke-width="1.0"/><path d="M1087.5 949.1 L1091.0 951.6 L1087.5 954.1 z" fill="#111"/><circle cx="997.4" cy="935.2" r="1.8" fill="#111"/><polyline points="997.5,935.5 997.5,1049.5 1026.5,1049.5" fill="none" stroke="#222" stroke-width="1.0"/><path d="M1022.5 1046.5 L1026.0 1049.0 L1022.5 1051.5 z" fill="#111"/><polyline points="993.5,953.5 1076.5,953.5 1076.5,965.5 1091.5,965.5" fill="none" stroke="#ff1a1a" stroke-width="1.0"/><path d="M1087.5 963.0 L1091.0 965.5 L1087.5 968.0 z" fill="#ff1a1a"/><circle cx="1000.0" cy="953.0" r="1.8" fill="#ff1a1a"/><polyline points="1000.5,953.5 1000.5,1043.5 1026.5,1043.5" fill="none" stroke="#ff1a1a" stroke-width="1.0"/><path d="M1022.5 1040.5 L1026.0 1043.0 L1022.5 1045.5 z" fill="#ff1a1a"/><rect x="924.5" y="986.6" width="14.5" height="11.0" fill="#e8c84a" stroke="#444" stroke-width="1.2" /><rect x="959.0" y="983.3" width="11.8" height="11.7" fill="#fff" stroke="#333" stroke-width="1.5" /><text x="964.9" y="990.8" text-anchor="middle" font-family="Liberation Sans" font-size="4.5" fill="#111">max</text><polyline points="943.5,988.5 959.5,988.5" fill="none" stroke="#222" stroke-width="1.0"/><path d="M955.5 986.0 L959.0 988.5 L955.5 991.0 z" fill="#111"/><polyline points="939.5,992.5 959.5,992.5" fill="none" stroke="#222" stroke-width="1.0"/><path d="M955.5 989.5 L959.0 992.0 L955.5 994.5 z" fill="#111"/><polyline points="970.5,989.5 1026.5,989.5" fill="none" stroke="#222" stroke-width="1.0"/><path d="M1022.5 986.5 L1026.0 989.0 L1022.5 991.5 z" fill="#111"/><rect x="1026.0" y="981.6" width="11.4" height="11.4" fill="#fff" stroke="#333" stroke-width="1.5" /><polyline points="1037.5,987.5 1082.5,987.5 1082.5,979.5 1091.5,979.5" fill="none" stroke="#222" stroke-width="1.0"/><path d="M1087.5 976.5 L1091.0 979.0 L1087.5 981.5 z" fill="#111"/><polyline points="1082.5,987.5 1082.5,992.5 1091.5,992.5" fill="none" stroke="#222" stroke-width="1.0"/><path d="M1087.5 990.2 L1091.0 992.7 L1087.5 995.2 z" fill="#111"/><text x="1012" y="1004" font-family="Liberation Sans" font-size="6" fill="#111">+E</text><polyline points="1004.5,1006.5 1091.5,1006.5" fill="none" stroke="#222" stroke-width="1.0"/><path d="M1087.5 1003.8 L1091.0 1006.3 L1087.5 1008.8 z" fill="#111"/><polyline points="1004.5,1006.5 1004.5,1161.5" fill="none" stroke="#222" stroke-width="1.0"/><rect x="1008.8" y="1024.4" width="62.6" height="10.6" fill="#62b6fb" stroke="#444" stroke-width="1.3" /><polyline points="1071.5,1029.5 1226.5,1029.5 1226.5,1126.5 1238.5,1126.5" fill="none" stroke="#222" stroke-width="1.0"/><path d="M1234.9 1124.3 L1238.4 1126.8 L1234.9 1129.2 z" fill="#111"/><circle cx="1081.0" cy="1029.7" r="1.8" fill="#111"/><polyline points="1081.5,1029.5 1081.5,1101.5 1091.5,1101.5" fill="none" stroke="#222" stroke-width="1.0"/><path d="M1087.5 1099.0 L1091.0 1101.5 L1087.5 1104.0 z" fill="#111"/><polyline points="1084.5,1029.5 1084.5,1174.5 1091.5,1174.5" fill="none" stroke="#222" stroke-width="1.0"/><path d="M1087.5 1171.8 L1091.0 1174.3 L1087.5 1176.8 z" fill="#111"/><rect x="1026.4" y="1043.2" width="11.3" height="12.1" fill="#fff" stroke="#ff1a1a" stroke-width="1.5" /><polyline points="1037.5,1050.5 1076.5,1050.5 1076.5,1138.5 1091.5,1138.5" fill="none" stroke="#ff1a1a" stroke-width="1.0"/><path d="M1087.5 1135.5 L1091.0 1138.0 L1087.5 1140.5 z" fill="#ff1a1a"/><text x="1012" y="1066" font-family="Liberation Sans" font-size="6" fill="#111">+E</text><polyline points="1004.5,1068.5 1137.5,1068.5" fill="none" stroke="#222" stroke-width="1.0"/><path d="M1133.7 1065.8 L1137.2 1068.2 L1133.7 1070.7 z" fill="#111"/><circle cx="1004.4" cy="1068.2" r="1.8" fill="#111"/><rect x="1137.2" y="1061.3" width="11.6" height="14.7" fill="#fff" stroke="#333" stroke-width="1.5" /><polyline points="1148.5,1068.5 1198.5,1068.5 1198.5,1132.5 1207.5,1132.5" fill="none" stroke="#222" stroke-width="1.0"/><path d="M1203.5 1130.0 L1207.0 1132.5 L1203.5 1135.0 z" fill="#111"/><rect x="1181.4" y="1045.6" width="12.8" height="7.0" fill="#e8c84a" stroke="#444" stroke-width="1.2" /><polyline points="1194.5,1049.5 1202.5,1049.5 1202.5,1126.5 1207.5,1126.5" fill="none" stroke="#222" stroke-width="1.0"/><path d="M1203.5 1124.3 L1207.0 1126.8 L1203.5 1129.2 z" fill="#111"/><text x="1012" y="1154" font-family="Liberation Sans" font-size="6" fill="#111">+E</text><polyline points="1004.5,1156.5 1091.5,1156.5" fill="none" stroke="#222" stroke-width="1.0"/><path d="M1087.5 1153.8 L1091.0 1156.2 L1087.5 1158.7 z" fill="#111"/><circle cx="1004.4" cy="1156.2" r="1.8" fill="#111"/><rect x="822.3" y="1133.3" width="45.3" height="10.3" fill="#fff" stroke="#333" stroke-width="1.5" /><rect x="822.3" y="1178.3" width="45.3" height="10.4" fill="#fff" stroke="#333" stroke-width="1.5" /><rect x="902.3" y="1131.3" width="11.3" height="14.9" fill="#fff" stroke="#333" stroke-width="1.5" /><rect x="902.3" y="1176.0" width="11.3" height="15.0" fill="#fff" stroke="#333" stroke-width="1.5" /><rect x="876.2" y="1155.3" width="63.0" height="11.0" fill="#62b6fb" stroke="#444" stroke-width="1.3" /><rect x="956.0" y="1128.3" width="13.0" height="65.8" fill="#fff" stroke="#333" stroke-width="1.5" /><text x="908" y="1140.5" text-anchor="middle" font-family="Liberation Sans" font-size="4.5" fill="#222">NOT</text><text x="908" y="1185.5" text-anchor="middle" font-family="Liberation Sans" font-size="4.5" fill="#222">NOT</text><text x="962.5" y="1163" text-anchor="middle" font-family="Liberation Sans" font-size="4.5" fill="#222">AND</text><text x="1143" y="1070.5" text-anchor="middle" font-family="Liberation Sans" font-size="4.5" fill="#222">NOT</text><text x="1216.2" y="1134.5" text-anchor="middle" font-family="Liberation Sans" font-size="4.5" fill="#222">==1</text><text x="1247.6" y="1128.8" text-anchor="middle" font-family="Liberation Sans" font-size="4.5" fill="#222">==1</text><text x="845" y="1140.5" text-anchor="middle" font-family="Liberation Sans" font-size="5" fill="#335">0</text><text x="845" y="1185.5" text-anchor="middle" font-family="Liberation Sans" font-size="5" fill="#335">0</text><text x="1040.6" y="903.5" text-anchor="middle" font-family="Liberation Sans" font-size="5" fill="#335">0</text><text x="970.5" y="937.5" text-anchor="middle" font-family="Liberation Sans" font-size="5" fill="#335">K</text><text x="970.5" y="955.5" text-anchor="middle" font-family="Liberation Sans" font-size="5" fill="#335">0</text><text x="907.5" y="975.5" text-anchor="middle" font-family="Liberation Sans" font-size="5" fill="#335">1</text><text x="1441" y="1129.5" text-anchor="middle" font-family="Liberation Sans" font-size="5" fill="#335">1</text><polyline points="867.5,1138.5 902.5,1138.5" fill="none" stroke="#222" stroke-width="1.0"/><path d="M898.8 1136.0 L902.3 1138.5 L898.8 1141.0 z" fill="#111"/><polyline points="913.5,1138.5 956.5,1138.5" fill="none" stroke="#222" stroke-width="1.0"/><path d="M952.5 1136.0 L956.0 1138.5 L952.5 1141.0 z" fill="#111"/><polyline points="939.5,1161.5 956.5,1161.5" fill="none" stroke="#222" stroke-width="1.0"/><path d="M952.5 1158.5 L956.0 1161.0 L952.5 1163.5 z" fill="#111"/><polyline points="867.5,1183.5 902.5,1183.5" fill="none" stroke="#222" stroke-width="1.0"/><path d="M898.8 1181.0 L902.3 1183.5 L898.8 1186.0 z" fill="#111"/><polyline points="913.5,1183.5 956.5,1183.5" fill="none" stroke="#222" stroke-width="1.0"/><path d="M952.5 1181.0 L956.0 1183.5 L952.5 1186.0 z" fill="#111"/><polyline points="969.5,1161.5 1004.5,1161.5" fill="none" stroke="#222" stroke-width="1.6"/><defs><linearGradient id="ggreen" x1="0" y1="0" x2="0" y2="1"><stop offset="0" stop-color="#08de08"/><stop offset="1" stop-color="#00c400"/></linearGradient></defs><rect x="1091.5" y="911.0" width="103.2" height="108.5" fill="url(#ggreen)" stroke="#ff1a1a" stroke-width="1.3" /><rect x="1091.5" y="1084.0" width="103.2" height="108.0" fill="url(#ggreen)" stroke="#ff1a1a" stroke-width="1.3" /><circle cx="1092" cy="911.5" r="4.2" fill="#eee" stroke="#333" stroke-width="1.1"/><path d="M1089.5 911.5 h5 M1092 909.0 v5" stroke="#111" stroke-width="1.5"/><circle cx="1092" cy="1083.5" r="4.2" fill="#eee" stroke="#333" stroke-width="1.1"/><path d="M1089.5 1083.5 h5 M1092 1081.0 v5" stroke="#111" stroke-width="1.5"/><polyline points="1194.5,965.5 1233.5,965.5 1233.5,1121.5 1238.5,1121.5" fill="none" stroke="#ff1a1a" stroke-width="1.0"/><path d="M1234.9 1118.8 L1238.4 1121.2 L1234.9 1123.7 z" fill="#ff1a1a"/><polyline points="1194.5,1137.5 1207.5,1137.5" fill="none" stroke="#ff1a1a" stroke-width="1.0"/><path d="M1203.5 1135.3 L1207.0 1137.8 L1203.5 1140.2 z" fill="#ff1a1a"/><rect x="1207.1" y="1125.4" width="18.2" height="14.4" fill="#fff" stroke="#ff1a1a" stroke-width="1.3" /><polyline points="1225.5,1132.5 1238.5,1132.5" fill="none" stroke="#222" stroke-width="1.0"/><path d="M1234.9 1130.0 L1238.4 1132.5 L1234.9 1135.0 z" fill="#111"/><rect x="1238.4" y="1119.4" width="18.4" height="15.1" fill="#fff" stroke="#ff1a1a" stroke-width="1.3" /><text x="1258" y="1126" font-family="Liberation Sans" font-size="6" fill="#111">+E</text><polyline points="1256.5,1126.5 1306.5,1126.5" fill="none" stroke="#ff1a1a" stroke-width="1.0"/><path d="M1302.5 1124.3 L1306.0 1126.8 L1302.5 1129.2 z" fill="#ff1a1a"/><rect x="1305.9" y="1121.4" width="54.9" height="11.1" fill="#fff" stroke="#ff1a1a" stroke-width="1.3" /><text x="1333" y="1129" text-anchor="middle" font-family="Liberation Sans" font-size="5" fill="#222">Lcc_facLambdaCorr</text><polyline points="1360.5,1127.5 1413.5,1127.5" fill="none" stroke="#ff1a1a" stroke-width="1.0"/><path d="M1409.5 1124.5 L1413.0 1127.0 L1409.5 1129.5 z" fill="#ff1a1a"/><rect x="1413.3" y="1121.5" width="55.2" height="11.5" fill="#fff" stroke="#ff1a1a" stroke-width="1.4" /><polyline points="1468.5,1127.5 1577.5,1127.5" fill="none" stroke="#ff1a1a" stroke-width="1.0"/><path d="M1567 1122.5 h7 l4 5 l-4 5 h-7 z" fill="#e02010" stroke="#ff1a1a" stroke-width="1.3"/><path d="M1478 1122.5 h7 l4 5 l-4 5 h-7 z" fill="#e02010" stroke="#ff1a1a" stroke-width="1.3"/><rect x="1578.0" y="773.5" width="762.0" height="573.0" fill="#e1ecfd" stroke="#3a3a3a" stroke-width="2.4" /><path d="M2341 775 V1347.5 H1580" fill="none" stroke="#111" stroke-width="1.2"/><ellipse cx="1578" cy="774" rx="4.620000000000001" ry="3.57" fill="#e8e8e8" stroke="#444" stroke-width="1.2"/><path d="M1575.2 774 h5.6" stroke="#111" stroke-width="1.8"/><rect x="1587.8" y="783.3" width="741.7" height="547.2" fill="none" stroke="#555" stroke-width="1.8" /><ellipse cx="1588" cy="784" rx="4.620000000000001" ry="3.57" fill="#e8e8e8" stroke="#444" stroke-width="1.2"/><path d="M1585.2 784 h5.6" stroke="#111" stroke-width="1.8"/><rect x="1634.7" y="808.6" width="654.1" height="474.9" fill="#b9d4ed" stroke="#444" stroke-width="1.5" /><ellipse cx="1635" cy="809" rx="4.620000000000001" ry="3.57" fill="#e8e8e8" stroke="#444" stroke-width="1.2"/><path d="M1632.2 809 h5.6" stroke="#111" stroke-width="1.8"/><path d="M1630 816.3 l3.5 2 l-3.5 2 z" fill="#111"/><path d="M1634 832.5 l-3.5 2 l3.5 2 z" fill="#111"/><path d="M1634 849 l-3.5 2 l3.5 2 z" fill="#111"/><path d="M1634 865.2 l-3.5 2 l3.5 2 z" fill="#111"/><path d="M1634 881.5 l-3.5 2 l3.5 2 z" fill="#111"/><path d="M1634 897.9 l-3.5 2 l3.5 2 z" fill="#111"/><path d="M1634 914 l-3.5 2 l3.5 2 z" fill="#111"/><path d="M2289 816 l3.5 2 l-3.5 2 z" fill="#111"/><rect x="1644.5" y="946.8" width="624.5" height="289.5" fill="#fdfdfd" stroke="#222" stroke-width="1.1" stroke-dasharray="3 2"/><ellipse cx="1645" cy="947" rx="4.620000000000001" ry="3.57" fill="#e8e8e8" stroke="#444" stroke-width="1.2"/><path d="M1642.2 947 h5.6" stroke="#111" stroke-width="1.8"/><rect x="2318" y="1347" width="22" height="5" fill="#5a9ae6"/><text x="2329" y="1351.5" text-anchor="middle" font-family="Liberation Sans" font-size="5" fill="#fff">Compact</text><rect x="1663.0" y="1062.8" width="10.5" height="3.4" fill="#fff" stroke="#333" stroke-width="1.3" /><rect x="1659.5" y="1081.5" width="14.0" height="4.5" fill="#fff" stroke="#333" stroke-width="1.3" /><rect x="1663.0" y="1095.6" width="10.5" height="2.7" fill="#fff" stroke="#333" stroke-width="1.3" /><rect x="1663.0" y="1113.6" width="10.5" height="3.2" fill="#fff" stroke="#333" stroke-width="1.3" /><rect x="1710.4" y="1074.4" width="7.1" height="10.2" fill="#fff" stroke="#333" stroke-width="1.1" /><rect x="1711.0" y="1093.5" width="6.5" height="6.9" fill="#fff" stroke="#333" stroke-width="1.1" /><rect x="1709.0" y="991.0" width="10.5" height="3.4" fill="#fff" stroke="#333" stroke-width="1.3" /><rect x="1754.5" y="987.2" width="10.2" height="10.4" fill="#fff" stroke="#333" stroke-width="1.1" /><rect x="1705.6" y="1020.4" width="14.1" height="5.1" fill="#fff" stroke="#333" stroke-width="1.3" /><rect x="1763.7" y="1019.7" width="6.8" height="6.8" fill="#fff" stroke="#333" stroke-width="1.1" /><rect x="1810.5" y="972.1" width="10.6" height="3.5" fill="#fff" stroke="#333" stroke-width="1.3" /><rect x="1810.5" y="990.3" width="10.6" height="3.4" fill="#fff" stroke="#333" stroke-width="1.3" /><rect x="1810.5" y="1021.4" width="10.6" height="3.5" fill="#fff" stroke="#333" stroke-width="1.3" /><rect x="1845.0" y="1050.5" width="52.7" height="30.0" fill="#fff" stroke="#333" stroke-width="1.3" /><path d="M1861 1060 v12 h13 M1862 1063 q3 8 8 8" fill="none" stroke="#2020e0" stroke-width="1"/><text x="1874" y="1070" font-family="Liberation Sans" font-size="6" font-weight="700" fill="#2020e0">DT</text><circle cx="1845" cy="1049.5" r="3.2" fill="#eee" stroke="#333" stroke-width="1.1"/><path d="M1842.5 1049.5 h5 M1845 1047.0 v5" stroke="#111" stroke-width="1.5"/><rect x="1807.0" y="1087.4" width="14.1" height="5.0" fill="#fff" stroke="#333" stroke-width="1.3" /><rect x="1754.1" y="1095.3" width="10.9" height="3.3" fill="#fff" stroke="#333" stroke-width="1.3" /><rect x="1915.4" y="1063.5" width="11.0" height="3.4" fill="#fff" stroke="#333" stroke-width="1.3" /><polyline points="1673.5,1064.5 1686.5,1064.5 1686.5,1076.5 1710.5,1076.5" fill="none" stroke="#222" stroke-width="1.0"/><polyline points="1673.5,1083.5 1710.5,1083.5" fill="none" stroke="#222" stroke-width="1.0"/><polyline points="1717.5,1079.5 1766.5,1079.5 1766.5,1026.5" fill="none" stroke="#222" stroke-width="1.0"/><polyline points="1719.5,1023.5 1763.5,1023.5" fill="none" stroke="#222" stroke-width="1.0"/><polyline points="1770.5,1023.5 1810.5,1023.5" fill="none" stroke="#222" stroke-width="1.0"/><polyline points="1719.5,992.5 1754.5,992.5" fill="none" stroke="#222" stroke-width="1.5" stroke-dasharray="4 2.5"/><polyline points="1764.5,992.5 1792.5,992.5 1792.5,1035.5 1846.5,1035.5 1846.5,1044.5 1863.5,1044.5" fill="none" stroke="#222" stroke-width="1.5" stroke-dasharray="4 2.5"/><polyline points="1760.5,997.5 1760.5,1004.5 1839.5,1004.5 1839.5,1031.5 1873.5,1031.5" fill="none" stroke="#222" stroke-width="1.5" stroke-dasharray="4 2.5"/><polyline points="1877.5,1032.5 1877.5,1048.5 1881.5,1048.5" fill="none" stroke="#222" stroke-width="1.5" stroke-dasharray="4 2.5"/><polyline points="1883.5,1044.5 1891.5,1044.5" fill="none" stroke="#222" stroke-width="1.5" stroke-dasharray="4 2.5"/><polyline points="1797.5,1008.5 1801.5,1008.5 1801.5,1016.5 1805.5,1016.5" fill="none" stroke="#222" stroke-width="1.0"/><circle cx="1792.0" cy="1008.0" r="1.6" fill="#111"/><polyline points="1821.5,1023.5 1868.5,1023.5 1868.5,1050.5" fill="none" stroke="#222" stroke-width="1.0"/><polyline points="1821.5,973.5 1873.5,973.5 1873.5,1050.5" fill="none" stroke="#222" stroke-width="1.0"/><polyline points="1821.5,992.5 1893.5,992.5 1893.5,1050.5" fill="none" stroke="#222" stroke-width="1.0"/><polyline points="1673.5,1097.5 1711.5,1097.5" fill="none" stroke="#222" stroke-width="1.0"/><polyline points="1717.5,1097.5 1754.5,1097.5" fill="none" stroke="#222" stroke-width="1.0"/><polyline points="1673.5,1115.5 1714.5,1115.5 1714.5,1100.5" fill="none" stroke="#222" stroke-width="1.0"/><polyline points="1765.5,1097.5 1975.5,1097.5 1975.5,1068.5" fill="none" stroke="#222" stroke-width="1.0"/><polyline points="1792.5,1097.5 1792.5,1065.5 1845.5,1065.5" fill="none" stroke="#222" stroke-width="1.0"/><circle cx="1816" cy="1065" r="1.8" fill="#fff" stroke="#222" stroke-width="0.8"/><polyline points="1821.5,1090.5 1870.5,1090.5 1870.5,1080.5" fill="none" stroke="#222" stroke-width="1.0"/><polyline points="1897.5,1065.5 1915.5,1065.5" fill="none" stroke="#222" stroke-width="1.0"/><polyline points="1926.5,1065.5 1970.5,1065.5" fill="none" stroke="#222" stroke-width="1.0"/><rect x="1970.4" y="1061.6" width="7.2" height="7.1" fill="#fff" stroke="#333" stroke-width="1.1" /><polyline points="1977.5,1065.5 2001.5,1065.5" fill="none" stroke="#222" stroke-width="1.0"/><rect x="2001.0" y="1061.6" width="7.2" height="7.1" fill="#fff" stroke="#ff1a1a" stroke-width="1.1" /><polyline points="1577.5,1127.5 1968.5,1127.5" fill="none" stroke="#ff1a1a" stroke-width="1.0"/><rect x="1968.0" y="1126.0" width="11.0" height="3.3" fill="#fff" stroke="#ff1a1a" stroke-width="1.3" /><polyline points="1979.5,1127.5 2005.5,1127.5 2005.5,1068.5" fill="none" stroke="#ff1a1a" stroke-width="1.0"/><polyline points="2008.5,1065.5 2028.5,1065.5" fill="none" stroke="#ff1a1a" stroke-width="1.0"/><rect x="2028.2" y="1063.4" width="10.6" height="3.1" fill="#fff" stroke="#ff1a1a" stroke-width="1.3" /><polyline points="2038.5,1065.5 2066.5,1065.5 2066.5,1076.5 2072.5,1076.5" fill="none" stroke="#ff1a1a" stroke-width="1.0"/><rect x="2035.3" y="1033.5" width="10.2" height="3.1" fill="#fff" stroke="#333" stroke-width="1.3" /><polyline points="2045.5,1035.5 2076.5,1035.5 2076.5,1073.5" fill="none" stroke="#222" stroke-width="1.5" stroke-dasharray="4 2.5"/><rect x="2072.4" y="1073.7" width="7.2" height="10.6" fill="#fff" stroke="#ff1a1a" stroke-width="1.1" /><rect x="2028.2" y="1082.0" width="10.6" height="2.9" fill="#fff" stroke="#333" stroke-width="1.3" /><polyline points="2038.5,1083.5 2072.5,1083.5" fill="none" stroke="#222" stroke-width="1.0"/><rect x="2028.2" y="1099.7" width="10.6" height="3.0" fill="#fff" stroke="#333" stroke-width="1.3" /><polyline points="2038.5,1101.5 2072.5,1101.5" fill="none" stroke="#222" stroke-width="1.0"/><rect x="2019.2" y="1118.3" width="30.5" height="4.8" fill="#fff" stroke="#333" stroke-width="1.3" /><polyline points="2049.5,1120.5 2076.5,1120.5 2076.5,1105.5" fill="none" stroke="#222" stroke-width="1.0"/><rect x="2072.7" y="1098.2" width="6.9" height="6.8" fill="#fff" stroke="#333" stroke-width="1.1" /><polyline points="2079.5,1101.5 2110.5,1101.5 2110.5,1082.5" fill="none" stroke="#222" stroke-width="1.0"/><polyline points="2079.5,1079.5 2105.5,1079.5" fill="none" stroke="#ff1a1a" stroke-width="1.0"/><polyline points="2086.5,1079.5 2086.5,1059.5 2094.5,1059.5" fill="none" stroke="#ff1a1a" stroke-width="1.0"/><rect x="2094.3" y="1057.4" width="10.5" height="3.0" fill="#fff" stroke="#ff1a1a" stroke-width="1.3" /><rect x="2105.9" y="1075.5" width="6.9" height="7.3" fill="#fff" stroke="#ff1a1a" stroke-width="1.1" /><polyline points="2112.5,1079.5 2139.5,1079.5 2139.5,1093.5 2155.5,1093.5" fill="none" stroke="#ff1a1a" stroke-width="1.0"/><polyline points="2139.5,1093.5 2139.5,1133.5 2155.5,1133.5" fill="none" stroke="#ff1a1a" stroke-width="1.0"/><rect x="2099.5" y="1014.4" width="10.6" height="3.0" fill="#fff" stroke="#333" stroke-width="1.3" /><polyline points="2110.5,1015.5 2146.5,1015.5 2146.5,1097.5 2155.5,1097.5" fill="none" stroke="#222" stroke-width="1.0"/><rect x="2091.2" y="1032.5" width="14.1" height="5.0" fill="#fff" stroke="#333" stroke-width="1.3" /><polyline points="2105.5,1035.5 2143.5,1035.5 2143.5,1104.5 2155.5,1104.5" fill="none" stroke="#222" stroke-width="1.0"/><rect x="2091.2" y="1105.5" width="14.1" height="5.0" fill="#fff" stroke="#333" stroke-width="1.3" /><rect x="2091.2" y="1118.3" width="14.1" height="5.0" fill="#fff" stroke="#333" stroke-width="1.3" /><rect x="2091.2" y="1131.9" width="14.1" height="5.0" fill="#fff" stroke="#333" stroke-width="1.3" /><rect x="2091.2" y="1145.2" width="14.1" height="5.0" fill="#fff" stroke="#333" stroke-width="1.3" /><rect x="2091.2" y="1158.8" width="14.1" height="5.0" fill="#fff" stroke="#333" stroke-width="1.3" /><rect x="2091.2" y="1190.5" width="14.1" height="5.0" fill="#fff" stroke="#333" stroke-width="1.3" /><rect x="2094.3" y="1171.9" width="10.5" height="3.6" fill="#fff" stroke="#333" stroke-width="1.3" /><polyline points="2105.5,1108.5 2155.5,1108.5" fill="none" stroke="#222" stroke-width="1.0"/><polyline points="2105.5,1120.5 2135.5,1120.5 2135.5,1137.5 2155.5,1137.5" fill="none" stroke="#222" stroke-width="1.0"/><polyline points="2105.5,1134.5 2131.5,1134.5 2131.5,1144.5 2155.5,1144.5" fill="none" stroke="#222" stroke-width="1.0"/><polyline points="2105.5,1147.5 2155.5,1147.5" fill="none" stroke="#222" stroke-width="1.0"/><polyline points="2105.5,1161.5 2160.5,1161.5 2160.5,1170.5" fill="none" stroke="#222" stroke-width="1.0"/><polyline points="2104.5,1173.5 2156.5,1173.5" fill="none" stroke="#222" stroke-width="1.0"/><polyline points="2105.5,1193.5 2160.5,1193.5 2160.5,1178.5" fill="none" stroke="#222" stroke-width="1.0"/><rect x="2155.1" y="1091.4" width="6.4" height="17.7" fill="#fff" stroke="#ff1a1a" stroke-width="1.2" /><rect x="2155.1" y="1131.4" width="6.4" height="18.1" fill="#fff" stroke="#ff1a1a" stroke-width="1.2" /><polyline points="2161.5,1100.5 2178.5,1100.5" fill="none" stroke="#ff1a1a" stroke-width="1.0"/><polyline points="2161.5,1140.5 2178.5,1140.5" fill="none" stroke="#ff1a1a" stroke-width="1.0"/><rect x="2178.9" y="1096.7" width="7.1" height="7.2" fill="#fff" stroke="#ff1a1a" stroke-width="1.1" /><rect x="2178.9" y="1137.2" width="7.1" height="7.1" fill="#fff" stroke="#ff1a1a" stroke-width="1.1" /><rect x="2151.7" y="1118.3" width="14.0" height="4.8" fill="#fff" stroke="#333" stroke-width="1.3" /><polyline points="2165.5,1120.5 2183.5,1120.5 2183.5,1103.5" fill="none" stroke="#222" stroke-width="1.0"/><rect x="2156.2" y="1170.4" width="7.1" height="7.6" fill="#fff" stroke="#333" stroke-width="1.1" /><polyline points="2163.5,1174.5 2183.5,1174.5 2183.5,1144.5" fill="none" stroke="#222" stroke-width="1.0"/><polyline points="2186.5,1100.5 2218.5,1100.5" fill="none" stroke="#ff1a1a" stroke-width="1.0"/><polyline points="2186.5,1140.5 2218.5,1140.5" fill="none" stroke="#ff1a1a" stroke-width="1.0"/><rect x="2218.1" y="1098.9" width="10.6" height="3.1" fill="#fff" stroke="#ff1a1a" stroke-width="1.3" /><polyline points="2228.5,1100.5 2232.5,1100.5" fill="none" stroke="#ff1a1a" stroke-width="1.0"/><rect x="2218.1" y="1138.7" width="10.6" height="3.6" fill="#fff" stroke="#ff1a1a" stroke-width="1.3" /><polyline points="2228.5,1140.5 2232.5,1140.5" fill="none" stroke="#ff1a1a" stroke-width="1.0"/><path d="M577 1372 h7 l-3.5 4 z" fill="#222"/><rect x="607" y="1367.2" width="3" height="3" fill="#8c8c8c" transform="rotate(0 608.5 1374.5)"/><rect x="607" y="1367.2" width="3" height="3" fill="#8c8c8c" transform="rotate(45 608.5 1374.5)"/><rect x="607" y="1367.2" width="3" height="3" fill="#8c8c8c" transform="rotate(90 608.5 1374.5)"/><rect x="607" y="1367.2" width="3" height="3" fill="#8c8c8c" transform="rotate(135 608.5 1374.5)"/><rect x="607" y="1367.2" width="3" height="3" fill="#8c8c8c" transform="rotate(180 608.5 1374.5)"/><rect x="607" y="1367.2" width="3" height="3" fill="#8c8c8c" transform="rotate(225 608.5 1374.5)"/><rect x="607" y="1367.2" width="3" height="3" fill="#8c8c8c" transform="rotate(270 608.5 1374.5)"/><rect x="607" y="1367.2" width="3" height="3" fill="#8c8c8c" transform="rotate(315 608.5 1374.5)"/><circle cx="608.5" cy="1374.5" r="5" fill="#8c8c8c"/><circle cx="608.5" cy="1374.5" r="1.6" fill="#fff"/><path d="M623 1373.5 l8 -5 l9 4.5 v2 l-8 5 l-9 -4.5 z" fill="#9a9a9a" stroke="#555" stroke-width="0.8"/><path d="M623 1373.5 l9 4.5 l8 -5" fill="none" stroke="#666" stroke-width="0.8"/><rect x="657.5" y="1367.5" width="12" height="13" fill="none" stroke="#8c8c8c" stroke-width="1"/><path d="M660.5 1369 v5 M664 1369 v5 M667 1369 v5" stroke="#8c8c8c" stroke-width="1"/><circle cx="660.5" cy="1371.5" r="1" fill="#8c8c8c"/><circle cx="667" cy="1370.5" r="1" fill="#8c8c8c"/><rect x="655.5" y="1375.5" width="10" height="5" fill="#fff" stroke="#8c8c8c" stroke-width="1"/><path d="M657.5 1377 v3.5 M660 1377 v3.5 M662.5 1377 v3.5" stroke="#8c8c8c"/><rect x="680.5" y="1367.5" width="12" height="13" fill="none" stroke="#8c8c8c" stroke-width="1"/><path d="M683.5 1369 v5 M687 1369 v5 M690 1369 v5" stroke="#8c8c8c" stroke-width="1"/><circle cx="683.5" cy="1371.5" r="1" fill="#8c8c8c"/><circle cx="690" cy="1370.5" r="1" fill="#8c8c8c"/><rect x="678.5" y="1375.5" width="10" height="5" fill="#fff" stroke="#8c8c8c" stroke-width="1"/><path d="M680.5 1377 v3.5 M683 1377 v3.5 M685.5 1377 v3.5" stroke="#8c8c8c"/><circle cx="689.5" cy="1378" r="3.2" fill="#fff" stroke="#8c8c8c"/><path d="M687.5 1376 l4 4 M691.5 1376 l-4 4" stroke="#8c8c8c" stroke-width="1.2"/><rect x="703.5" y="1367.5" width="12" height="13" fill="none" stroke="#8c8c8c" stroke-width="1"/><path d="M706.5 1369 v5 M710 1369 v5 M713 1369 v5" stroke="#8c8c8c" stroke-width="1"/><circle cx="706.5" cy="1371.5" r="1" fill="#8c8c8c"/><circle cx="713" cy="1370.5" r="1" fill="#8c8c8c"/><rect x="701.5" y="1375.5" width="10" height="5" fill="#fff" stroke="#8c8c8c" stroke-width="1"/><path d="M703.5 1377 v3.5 M706 1377 v3.5 M708.5 1377 v3.5" stroke="#8c8c8c"/><path d="M701.5 1373 h8 v5 h8" fill="none" stroke="#8c8c8c" stroke-width="1.5"/><path d="M725 1369 l12 5.5 l-12 5.5 z" fill="#8c8c8c"/><rect x="749.5" y="1369.5" width="10" height="10" fill="#8c8c8c" stroke="#808080"/><rect x="751" y="1371" width="7" height="1" fill="#fff"/><rect x="2421.5" y="1367.5" width="14" height="14" fill="#f4faff" stroke="#9a7a40"/><path d="M2424 1372 h9 M2424 1375 h9 M2424 1378 h6" stroke="#6080c0"/><rect x="2445.5" y="1367.5" width="14" height="14" fill="#f4faff" stroke="#9a7a40"/><rect x="2446" y="1368" width="4" height="13" fill="#8aa0c8"/><path d="M2452 1371 h5 M2452 1374 h5 M2452 1377 h3" stroke="#6080c0"/><rect x="2467.5" y="1367.5" width="14" height="14" fill="#f4faff" stroke="#9a7a40"/><circle cx="2476" cy="1374" r="2.5" fill="#6a8ac8"/><path d="M2472 1381 q4 -6 8 0" fill="#6a8ac8"/><path d="M2496 1374.5 h12" stroke="#2233aa" stroke-width="2.5"/><path d="M2519 1374.5 h12 M2525 1368.5 v12" stroke="#2233aa" stroke-width="2.5"/><text x="2542" y="1372" font-family="Liberation Sans" font-size="8" fill="#999">100</text><text x="2545" y="1381" font-family="Liberation Sans" font-size="8" fill="#999">%</text>
</svg>
<div style="position:absolute;left:26.8px;top:7.00px;font-size:15.80px;line-height:15.80px;font-weight:400;color:#000;white-space:pre;letter-spacing:-0.727px;">EHANDBOOK-NAVIGATOR - QuickStartDemo.ehb</div><div style="position:absolute;left:6.5px;top:34.00px;font-size:15.80px;line-height:15.80px;font-weight:400;color:#000;white-space:pre;letter-spacing:-0.487px;">File</div><div style="position:absolute;left:43.5px;top:34.00px;font-size:15.80px;line-height:15.80px;font-weight:400;color:#000;white-space:pre;letter-spacing:-1.013px;">Search</div><div style="position:absolute;left:101.0px;top:34.00px;font-size:15.80px;line-height:15.80px;font-weight:400;color:#000;white-space:pre;letter-spacing:0.012px;">View</div><div style="position:absolute;left:147.6px;top:34.00px;font-size:15.80px;line-height:15.80px;font-weight:400;color:#000;white-space:pre;letter-spacing:-0.125px;">Data</div><div style="position:absolute;left:193.5px;top:34.00px;font-size:15.80px;line-height:15.80px;font-weight:400;color:#000;white-space:pre;letter-spacing:0.168px;">Help</div><div style="position:absolute;left:245.0px;top:64.00px;font-size:15.80px;line-height:15.80px;font-weight:400;color:#5c5c5c;white-space:pre;letter-spacing:-0.512px;">Find in EHANDBOOK file(s) (Ctrl+H)</div><div style="position:absolute;left:528.0px;top:64.00px;font-size:15.80px;line-height:15.80px;font-weight:400;color:#000;white-space:pre;letter-spacing:-0.480px;">Contains</div><div style="position:absolute;left:26.0px;top:94.00px;font-size:15.40px;line-height:15.40px;font-weight:700;color:#404040;white-space:pre;letter-spacing:-0.327px;">Document Ex...</div><div style="position:absolute;left:182.0px;top:94.00px;font-size:15.40px;line-height:15.40px;font-weight:700;color:#404040;white-space:pre;letter-spacing:-0.485px;">Bookmarks</div><div style="position:absolute;left:293.0px;top:94.00px;font-size:15.40px;line-height:15.40px;font-weight:700;color:#404040;white-space:pre;letter-spacing:-0.096px;">Model Explorer</div><div style="position:absolute;left:4.0px;top:145.00px;font-size:15.80px;line-height:15.80px;font-weight:700;color:#000;white-space:pre;letter-spacing:-0.526px;">Function view (alphabetical order)</div><div style="position:absolute;left:22.0px;top:168.00px;font-size:15.80px;line-height:15.80px;font-weight:400;color:#7a7a7a;white-space:pre;letter-spacing:-0.467px;">Filter Functions</div><div style="position:absolute;left:44.2px;top:194.00px;font-size:15.30px;line-height:15.30px;font-weight:400;color:#000;white-space:pre;letter-spacing:-0.147px;">Title Page</div><div style="position:absolute;left:44.2px;top:217.00px;font-size:15.30px;line-height:15.30px;font-weight:400;color:#000;white-space:pre;letter-spacing:-0.274px;">Function1</div><div style="position:absolute;left:64.2px;top:240.00px;font-size:15.30px;line-height:15.30px;font-weight:400;color:#000;white-space:pre;letter-spacing:-0.040px;">Function Documentation</div><div style="position:absolute;left:84.2px;top:263.00px;font-size:15.30px;line-height:15.30px;font-weight:400;color:#000;white-space:pre;letter-spacing:-0.231px;">Function Overview</div><div style="position:absolute;left:84.2px;top:286.00px;font-size:15.30px;line-height:15.30px;font-weight:400;color:#000;white-space:pre;letter-spacing:-0.077px;">Function Description</div><div style="position:absolute;left:64.2px;top:309.00px;font-size:15.30px;line-height:15.30px;font-weight:400;color:#000;white-space:pre;letter-spacing:-0.303px;">Systemconstant-Parameter-Variable-Classinstance-Structure</div><div style="position:absolute;left:84.2px;top:332.00px;font-size:15.30px;line-height:15.30px;font-weight:400;color:#000;white-space:pre;letter-spacing:-0.304px;">Parameter</div><div style="position:absolute;left:84.2px;top:355.00px;font-size:15.30px;line-height:15.30px;font-weight:400;color:#000;white-space:pre;letter-spacing:0.143px;">Variable</div><div style="position:absolute;left:64.2px;top:378.00px;font-size:15.30px;line-height:15.30px;font-weight:400;color:#000;white-space:pre;letter-spacing:-0.563px;">FuelMass_Project</div><div style="position:absolute;left:64.2px;top:401.00px;font-size:15.30px;line-height:15.30px;font-weight:400;color:#000;white-space:pre;letter-spacing:-0.231px;">Function Overview</div><div style="position:absolute;left:44.2px;top:424.00px;font-size:15.30px;line-height:15.30px;font-weight:400;color:#000;white-space:pre;letter-spacing:-0.149px;">Function2</div><div style="position:absolute;left:64.2px;top:447.00px;font-size:15.30px;line-height:15.30px;font-weight:400;color:#000;white-space:pre;letter-spacing:-0.040px;">Function Documentation</div><div style="position:absolute;left:64.2px;top:470.00px;font-size:15.30px;line-height:15.30px;font-weight:400;color:#000;white-space:pre;letter-spacing:-0.303px;">Systemconstant-Parameter-Variable-Classinstance-Structure</div><div style="position:absolute;left:64.2px;top:493.00px;font-size:15.30px;line-height:15.30px;font-weight:400;color:#000;white-space:pre;letter-spacing:-0.405px;">Lcc</div><div style="position:absolute;left:64.2px;top:516.00px;font-size:15.30px;line-height:15.30px;font-weight:400;color:#000;white-space:pre;letter-spacing:-0.231px;">Function Overview</div><div style="position:absolute;left:44.2px;top:539.00px;font-size:15.30px;line-height:15.30px;font-weight:400;color:#000;white-space:pre;letter-spacing:-0.149px;">Function3</div><div style="position:absolute;left:64.2px;top:562.00px;font-size:15.30px;line-height:15.30px;font-weight:400;color:#000;white-space:pre;letter-spacing:-0.040px;">Function Documentation</div><div style="position:absolute;left:64.2px;top:585.00px;font-size:15.30px;line-height:15.30px;font-weight:400;color:#000;white-space:pre;letter-spacing:-0.303px;">Systemconstant-Parameter-Variable-Classinstance-Structure</div><div style="position:absolute;left:64.2px;top:608.00px;font-size:15.30px;line-height:15.30px;font-weight:400;color:#000;white-space:pre;letter-spacing:-0.149px;">Function3</div><div style="position:absolute;left:64.2px;top:631.00px;font-size:15.30px;line-height:15.30px;font-weight:400;color:#000;white-space:pre;letter-spacing:-0.231px;">Function Overview</div><div style="position:absolute;left:26.0px;top:1011.00px;font-size:15.40px;line-height:15.40px;font-weight:700;color:#404040;white-space:pre;letter-spacing:-0.174px;">Outline</div><div style="position:absolute;left:5.6px;top:1044.00px;font-size:15.80px;line-height:15.80px;font-weight:400;color:#000;white-space:pre;letter-spacing:-0.335px;">There is no active editor that provides an outline.</div><div style="position:absolute;left:492.0px;top:106.00px;font-size:15.40px;line-height:15.40px;font-weight:700;color:#1c4f9c;white-space:pre;letter-spacing:-0.446px;">Function1</div><div style="position:absolute;left:500.8px;top:193.00px;font-size:29.00px;line-height:29.00px;font-weight:700;color:#1f4f9b;white-space:pre;letter-spacing:-0.505px;">Function1</div><div style="position:absolute;left:501.4px;top:246.00px;font-size:24.50px;line-height:24.50px;font-weight:700;color:#1f4f9b;white-space:pre;letter-spacing:0.132px;">1 Function Documentation</div><div style="position:absolute;left:501.4px;top:294.00px;font-size:24.00px;line-height:24.00px;font-weight:700;color:#1f4f9b;white-space:pre;letter-spacing:0.438px;">1.1 Function Overview</div><div style="position:absolute;left:501.6px;top:340.00px;font-size:17.60px;line-height:17.60px;font-weight:400;color:#000;white-space:pre;">The function overview diagram provides a graphical overview of the function’s interface.</div><div style="position:absolute;left:501.0px;top:380.00px;font-size:17.37px;line-height:17.37px;font-weight:400;color:#000;white-space:pre;">Figure 1. Function Overview for Function1</div><div style="position:absolute;left:539.5px;top:439.00px;font-size:17.17px;line-height:17.17px;font-weight:400;color:#fff;white-space:pre;">Open Function Overview</div><div style="position:absolute;left:552.0px;top:506.00px;font-size:12.67px;line-height:12.67px;font-weight:400;color:#1212ee;white-space:pre;">Tqs_tqReq</div><div style="position:absolute;left:552.0px;top:544.00px;font-size:12.90px;line-height:12.90px;font-weight:400;color:#1212ee;white-space:pre;">Afr_facRatio</div><div style="position:absolute;left:552.0px;top:580.00px;font-size:13.01px;line-height:13.01px;font-weight:400;color:#1212ee;white-space:pre;">Amf_mAirPerStr</div><div style="position:absolute;left:552.0px;top:618.00px;font-size:12.54px;line-height:12.54px;font-weight:400;color:#1212ee;white-space:pre;">Epm_rpmEngSpd</div><div style="position:absolute;left:552.0px;top:654.00px;font-size:13.58px;line-height:13.58px;font-weight:400;color:#1212ee;white-space:pre;">Itc_tiInjOffset</div><div style="position:absolute;left:552.0px;top:693.00px;font-size:12.55px;line-height:12.55px;font-weight:400;color:#1212ee;white-space:pre;">Lcc_facLambdaCorr</div><div style="position:absolute;left:724.0px;top:599.00px;font-size:12.50px;line-height:12.50px;font-weight:400;color:#1212ee;white-space:pre;">Fmc_mFuel</div><div style="position:absolute;left:492.0px;top:745.00px;font-size:15.40px;line-height:15.40px;font-weight:700;color:#404040;white-space:pre;letter-spacing:-0.291px;">FunctionOverviewDiagram1</div><div style="position:absolute;left:7.4px;top:1367.00px;font-size:15.80px;line-height:15.80px;font-weight:400;color:#000;white-space:pre;letter-spacing:-1.155px;">EHANDBOOK_NAVIGATOR License</div><div style="position:absolute;left:251.5px;top:1367.00px;font-size:15.80px;line-height:15.80px;font-weight:400;color:#000;white-space:pre;letter-spacing:-0.611px;">Data Source:</div><div style="position:absolute;left:344.3px;top:1368.00px;font-size:15.80px;line-height:15.80px;font-weight:400;color:#000;white-space:pre;letter-spacing:-0.257px;">None</div>
</body></html>
